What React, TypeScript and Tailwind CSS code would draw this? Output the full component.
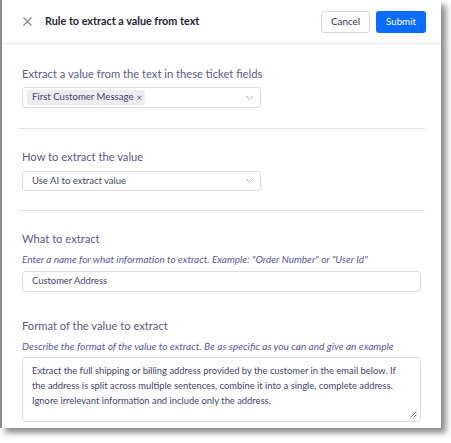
import React from "react";

const font = { fontFamily: 'Lato, "Noto Sans", sans-serif' };

function Chevron() {
  return (
    <svg width="9" height="6" viewBox="0 0 9 6" className="shrink-0">
      <path d="M1 1 L4.5 4.5 L8 1" fill="none" stroke="#b4b4c0" strokeWidth="1" />
    </svg>
  );
}

export default function App() {
  return (
    <div className="w-[451px] h-[443px] bg-white" style={font}>
      <div className="w-[441px] h-[428px] bg-white border-l-2 border-[#8c8c8c] shadow-[5px_5px_6px_rgba(0,0,0,0.45)] flex flex-col">
        {/* Header */}
        <div className="h-[44px] border-b border-[#ebebf0] flex items-center pl-[21px] pr-[15px] shrink-0">
          <svg width="9" height="9" viewBox="0 0 9 9" className="shrink-0">
            <path d="M0.5 0.5 L8.5 8.5 M8.5 0.5 L0.5 8.5" stroke="#8a8a92" strokeWidth="1.2" />
          </svg>
          <div className="ml-[13px] text-[10.8px] font-bold text-[#25252f] leading-none">
            Rule to extract a value from text
          </div>
          <div className="ml-auto flex items-center gap-[6px]">
            <div className="w-[49px] h-[22px] border border-[#d6d6dc] rounded-[3px] flex items-center justify-center text-[9.8px] text-[#33334a]">
              Cancel
            </div>
            <div className="w-[50px] h-[22px] bg-[#0a6cff] rounded-[3px] flex items-center justify-center text-[9.8px] text-white">
              Submit
            </div>
          </div>
        </div>

        {/* Section 1 */}
        <div className="px-[20px] pt-[22px]">
          <div className="text-[11.2px] leading-[16px] text-[#5a5a86]">
            Extract a value from the text in these ticket fields
          </div>
          <div className="mt-[5px] w-[239px] h-[21px] border border-[#dcdce2] rounded-[3px] flex items-center pl-[4px] pr-[6px]">
            <div className="h-[15px] bg-[#ececf1] rounded-[2px] flex items-center pl-[5px] pr-[3px] text-[9.6px] text-[#45456e]">
              First Customer Message
              <span className="ml-[3px] text-[#70707c] text-[10px]">×</span>
            </div>
            <div className="ml-auto">
              <Chevron />
            </div>
          </div>
        </div>
        <div className="mx-[16px] mt-[20px] border-t border-[#e3e3e8]" />

        {/* Section 2 */}
        <div className="px-[20px] pt-[20px]">
          <div className="text-[11.2px] leading-[16px] text-[#5a5a86]">How to extract the value</div>
          <div className="mt-[6px] w-[239px] h-[20px] border border-[#dcdce2] rounded-[3px] flex items-center pl-[9px] pr-[6px]">
            <div className="text-[9.5px] text-[#45456e]">Use AI to extract value</div>
            <div className="ml-auto">
              <Chevron />
            </div>
          </div>
        </div>
        <div className="mx-[16px] mt-[19px] border-t border-[#e3e3e8]" />

        {/* Section 3 */}
        <div className="px-[20px] pt-[20px]">
          <div className="text-[11.2px] leading-[16px] text-[#5a5a86]">What to extract</div>
          <div className="mt-[4px] text-[10px] leading-[16px] italic text-[#5a5a9a] whitespace-nowrap">
            Enter a name for what information to extract. Example: "Order Number" or "User Id"
          </div>
          <div className="mt-[4px] h-[21px] border border-[#dcdce2] rounded-[4px] flex items-center pl-[9px]">
            <div className="text-[9.4px] text-[#45456e]">Customer Address</div>
          </div>
        </div>

        {/* Section 4 */}
        <div className="px-[20px] pt-[26px]">
          <div className="text-[11.2px] leading-[16px] text-[#5a5a86]">Format of the value to extract</div>
          <div className="mt-[4px] text-[10.1px] leading-[16px] italic text-[#5a5a9a] whitespace-nowrap">
            Describe the format of the value to extract. Be as specific as you can and give an example
          </div>
          <div className="mt-[3px] h-[65px] border border-[#dcdce2] rounded-[4px] relative pl-[9px] pr-[10px] pt-[5px]">
            <div className="text-[9.4px] leading-[15px] text-[#45456e] whitespace-nowrap">
              Extract the full shipping or billing address provided by the customer in the email below. If
              <br />
              the address is split across multiple sentences, combine it into a single, complete address.
              <br />
              Ignore irrelevant information and include only the address.
            </div>
            <svg width="7" height="7" viewBox="0 0 7 7" className="absolute right-[3px] bottom-[3px]">
              <path d="M6.5 0.5 L0.5 6.5 M6.5 3.5 L3.5 6.5" stroke="#6a6a72" strokeWidth="1" />
            </svg>
          </div>
        </div>
      </div>
    </div>
  );
}
